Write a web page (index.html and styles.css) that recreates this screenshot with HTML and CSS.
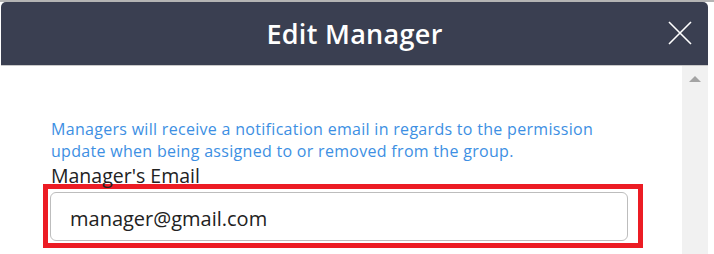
FILE: index.html
```html
<!DOCTYPE html>
<html lang="en">
<head>
<meta charset="utf-8">
<title>Edit Manager</title>
<link rel="stylesheet" href="styles.css">
</head>
<body>
<div class="topline"></div>
<div class="modal">
  <div class="header">
    <h1 class="title">Edit Manager</h1>
    <button class="close" aria-label="Close">
      <svg width="24" height="24" viewBox="0 0 24 24"><path d="M1 1 L23 23 M23 1 L1 23" stroke="#ffffff" stroke-width="1.6" fill="none"/></svg>
    </button>
  </div>
  <div class="body">
    <div class="content">
      <p class="note">Managers will receive a notification email in regards to the permission update when being assigned to or removed from the group.</p>
      <label class="label" for="email">Manager's Email</label>
      <div class="highlight">
        <input id="email" class="input" type="text" value="manager@gmail.com">
      </div>
    </div>
    <div class="scrollbar">
      <div class="arrow"></div>
    </div>
  </div>
</div>
</body>
</html>
```
FILE: styles.css
```css
html, body {
  margin: 0;
  padding: 0;
  background: #ffffff;
  font-family: "Open Sans", "Noto Sans", sans-serif;
}
.topline {
  height: 2px;
  background: #b4b4b4;
}
.modal {
  margin-left: 1px;
  width: 707px;
}
.header {
  position: relative;
  height: 63px;
  background: #3a3f51;
  border-radius: 5px 5px 0 0;
  border-bottom: 1px solid #c9c9c9;
  display: flex;
  align-items: center;
  justify-content: center;
}
.title {
  margin: 0;
  color: #ffffff;
  font-size: 27px;
  font-weight: 600;
  letter-spacing: 0.3px;
}
.close {
  position: absolute;
  right: 16px;
  top: 19px;
  background: none;
  border: 0;
  padding: 0;
  width: 24px;
  height: 24px;
  display: block;
}
.close svg { display: block; }
.body {
  display: flex;
  height: 188px;
}
.content {
  flex: 1;
  padding: 52px 0 0 50px;
}
.note {
  margin: 0;
  color: #3d8fe3;
  font-size: 16px;
  letter-spacing: 0.3px;
  line-height: 22px;
  width: 580px;
}
.label {
  display: block;
  color: #222222;
  font-size: 19.5px;
  line-height: 27px;
}
.highlight {
  margin-left: -8px;
  margin-top: -5px;
  width: 584px;
  border: 5px solid #ec1c24;
  padding: 3px 4px 2px 2px;
}
.input {
  display: block;
  box-sizing: border-box;
  width: 578px;
  height: 49px;
  border: 1px solid #bdbdbd;
  border-radius: 6px;
  padding: 3px 0 0 19px;
  font-family: "Open Sans", "Noto Sans", sans-serif;
  font-size: 20px;
  color: #222222;
  background: #ffffff;
  outline: none;
}
.scrollbar {
  width: 26px;
  background: #f1f1f1;
  display: flex;
  justify-content: center;
  padding-top: 10px;
  box-sizing: border-box;
}
.arrow {
  width: 0;
  height: 0;
  border-left: 6px solid transparent;
  border-right: 6px solid transparent;
  border-bottom: 6px solid #a3a3a3;
}
```
